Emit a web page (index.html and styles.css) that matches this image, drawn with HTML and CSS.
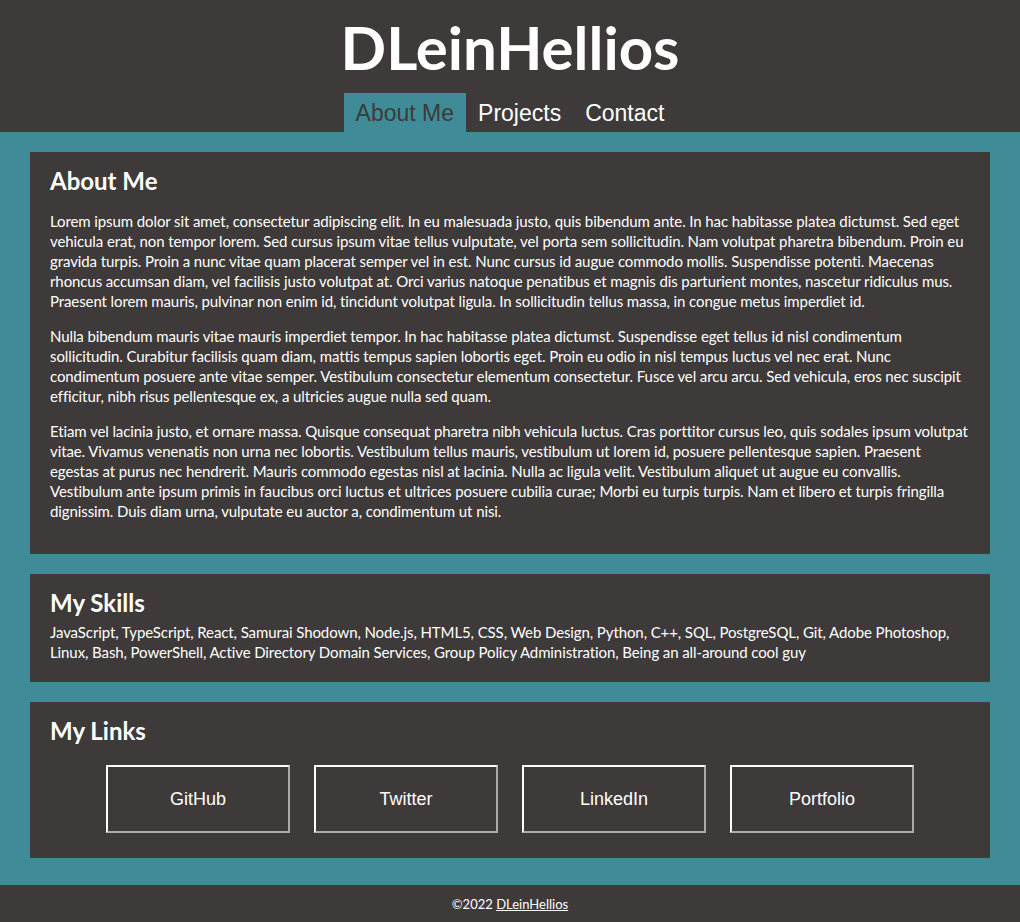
FILE: index.html
```html
<!DOCTYPE html>
<html lang="en">
<head>
<meta charset="utf-8">
<title>DLeinHellios</title>
<link rel="stylesheet" href="styles.css">
</head>
<body>
<header class="site-header">
  <h1 class="site-title">DLeinHellios</h1>
  <nav class="site-nav">
    <a class="nav-item nav-item--active" href="#">About Me</a>
    <a class="nav-item" href="#">Projects</a>
    <a class="nav-item" href="#">Contact</a>
  </nav>
</header>
<main class="content">
  <section class="card card--about">
    <h2 class="card-title card-title--spaced">About Me</h2>
    <p class="card-text">Lorem ipsum dolor sit amet, consectetur adipiscing elit. In eu malesuada justo, quis bibendum ante. In hac habitasse platea dictumst. Sed eget vehicula erat, non tempor lorem. Sed cursus ipsum vitae tellus vulputate, vel porta sem sollicitudin. Nam volutpat pharetra bibendum. Proin eu gravida turpis. Proin a nunc vitae quam placerat semper vel in est. Nunc cursus id augue commodo mollis. Suspendisse potenti. Maecenas rhoncus accumsan diam, vel facilisis justo volutpat at. Orci varius natoque penatibus et magnis dis parturient montes, nascetur ridiculus mus. Praesent lorem mauris, pulvinar non enim id, tincidunt volutpat ligula. In sollicitudin tellus massa, in congue metus imperdiet id.</p>
    <p class="card-text">Nulla bibendum mauris vitae mauris imperdiet tempor. In hac habitasse platea dictumst. Suspendisse eget tellus id nisl condimentum sollicitudin. Curabitur facilisis quam diam, mattis tempus sapien lobortis eget. Proin eu odio in nisl tempus luctus vel nec erat. Nunc condimentum posuere ante vitae semper. Vestibulum consectetur elementum consectetur. Fusce vel arcu arcu. Sed vehicula, eros nec suscipit efficitur, nibh risus pellentesque ex, a ultricies augue nulla sed quam.</p>
    <p class="card-text">Etiam vel lacinia justo, et ornare massa. Quisque consequat pharetra nibh vehicula luctus. Cras porttitor cursus leo, quis sodales ipsum volutpat vitae. Vivamus venenatis non urna nec lobortis. Vestibulum tellus mauris, vestibulum ut lorem id, posuere pellentesque sapien. Praesent egestas at purus nec hendrerit. Mauris commodo egestas nisl at lacinia. Nulla ac ligula velit. Vestibulum aliquet ut augue eu convallis. Vestibulum ante ipsum primis in faucibus orci luctus et ultrices posuere cubilia curae; Morbi eu turpis turpis. Nam et libero et turpis fringilla dignissim. Duis diam urna, vulputate eu auctor a, condimentum ut nisi.</p>
  </section>
  <section class="card">
    <h2 class="card-title">My Skills</h2>
    <p class="skills-text">JavaScript, TypeScript, React, Samurai Shodown, Node.js, HTML5, CSS, Web Design, Python, C++, SQL, PostgreSQL, Git, Adobe Photoshop, Linux, Bash, PowerShell, Active Directory Domain Services, Group Policy Administration, Being an all-around cool guy</p>
  </section>
  <section class="card card--links">
    <h2 class="card-title">My Links</h2>
    <div class="link-row">
      <button class="link-button" type="button">GitHub</button>
      <button class="link-button" type="button">Twitter</button>
      <button class="link-button" type="button">LinkedIn</button>
      <button class="link-button" type="button">Portfolio</button>
    </div>
  </section>
</main>
<footer class="site-footer">
  <span>&copy;2022 <a class="footer-link" href="#">DLeinHellios</a></span>
</footer>
</body>
</html>
```
FILE: styles.css
```css
* { box-sizing: border-box; }

html, body {
  margin: 0;
  padding: 0;
}

body {
  background: #3f8b97;
  color: #ffffff;
  font-family: "Lato", "Noto Sans", sans-serif;
  font-size: 15px;
  line-height: 20px;
  letter-spacing: -0.1px;
}

.site-header {
  background: #3e3a39;
  padding-top: 7px;
  display: flex;
  flex-direction: column;
  align-items: center;
}

.site-title {
  margin: 0 0 6px;
  font-size: 60px;
  line-height: 80px;
  font-weight: 700;
  letter-spacing: 0;
}

.site-nav {
  display: flex;
  height: 39px;
}

.nav-item {
  display: flex;
  align-items: center;
  padding: 0 12px;
  font-family: "Liberation Sans", Arial, sans-serif;
  font-size: 23px;
  letter-spacing: 0;
  color: #ffffff;
  text-decoration: none;
}

.nav-item--active {
  background: #3f8b97;
  color: #3e3a39;
}

.content {
  padding: 20px 30px 27px;
  display: flex;
  flex-direction: column;
  gap: 20px;
}

.card {
  background: #3e3a39;
  padding: 20px;
}

.card--about {
  padding-bottom: 18px;
}

.card-title {
  margin: 0 0 10px;
  font-size: 24px;
  line-height: 18px;
  font-weight: 700;
  letter-spacing: 0;
}

.card-title--spaced {
  margin-bottom: 21px;
}

.card-text {
  margin: 0 0 15px;
}

.skills-text {
  margin: 0;
}

.card--links {
  padding-bottom: 25px;
}

.link-row {
  margin-top: 25px;
  display: flex;
  justify-content: center;
  gap: 24px;
}

.link-button {
  width: 184px;
  height: 68px;
  background: #3e3a39;
  color: #ffffff;
  font-family: "Liberation Sans", Arial, sans-serif;
  font-size: 18px;
  letter-spacing: 0;
  border: 2px solid;
  border-color: #ffffff #aaaaaa #aaaaaa #ffffff;
  padding: 0;
}

.site-footer {
  background: #3e3a39;
  height: 37px;
  display: flex;
  align-items: center;
  justify-content: center;
  font-size: 13px;
  letter-spacing: 0;
}

.footer-link {
  color: #ffffff;
}
```
